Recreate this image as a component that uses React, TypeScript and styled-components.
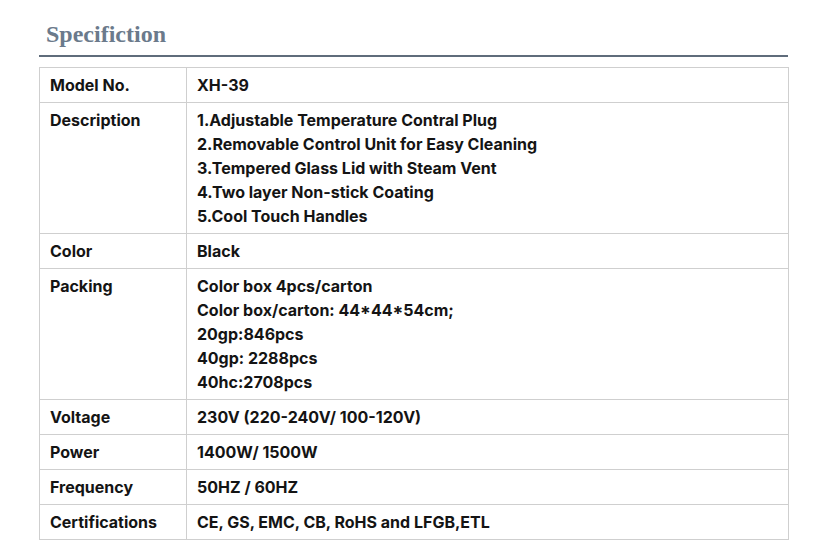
import React from "react";
import styled, { createGlobalStyle } from "styled-components";

const Global = createGlobalStyle`
  html, body { margin: 0; padding: 0; background: #fff; }
  body { font-family: Inter, "Noto Sans", sans-serif; }
`;

const Page = styled.div`
  width: 821px;
  padding: 19px 33px 0 39px;
  box-sizing: border-box;
`;

const Title = styled.h2`
  margin: 0;
  padding: 0 0 6px 7px;
  font-family: "Liberation Serif", "Times New Roman", serif;
  font-weight: 700;
  font-size: 24px;
  line-height: 30px;
  color: #6b7a8b;
  border-bottom: 2px solid #5f6c7b;
`;

const Table = styled.table`
  margin-top: 10px;
  width: 750px;
  border-collapse: collapse;
  font-size: 16px;
  font-weight: 700;
  color: #141414;
  line-height: 24px;
`;

const Cell = styled.td<{ $label?: boolean }>`
  border: 1px solid #cfcfcf;
  padding: 5px 10px;
  vertical-align: top;
  width: ${(p) => (p.$label ? "126px" : "auto")};
`;

const Line = styled.div``;

const rows: [string, string[]][] = [
  ["Model No.", ["XH-39"]],
  [
    "Description",
    [
      "1.Adjustable Temperature Contral Plug",
      "2.Removable Control Unit for Easy Cleaning",
      "3.Tempered Glass Lid with Steam Vent",
      "4.Two layer Non-stick Coating",
      "5.Cool Touch Handles",
    ],
  ],
  ["Color", ["Black"]],
  [
    "Packing",
    [
      "Color box 4pcs/carton",
      "Color box/carton: 44*44*54cm;",
      "20gp:846pcs",
      "40gp: 2288pcs",
      "40hc:2708pcs",
    ],
  ],
  ["Voltage", ["230V (220-240V/ 100-120V)"]],
  ["Power", ["1400W/ 1500W"]],
  ["Frequency", ["50HZ / 60HZ"]],
  ["Certifications", ["CE, GS, EMC, CB, RoHS and LFGB,ETL"]],
];

export default function App() {
  return (
    <>
      <Global />
      <Page>
        <Title>Specifiction</Title>
        <Table>
          <tbody>
            {rows.map(([label, values]) => (
              <tr key={label}>
                <Cell $label>{label}</Cell>
                <Cell>
                  {values.map((v) => (
                    <Line key={v}>{v}</Line>
                  ))}
                </Cell>
              </tr>
            ))}
          </tbody>
        </Table>
      </Page>
    </>
  );
}
